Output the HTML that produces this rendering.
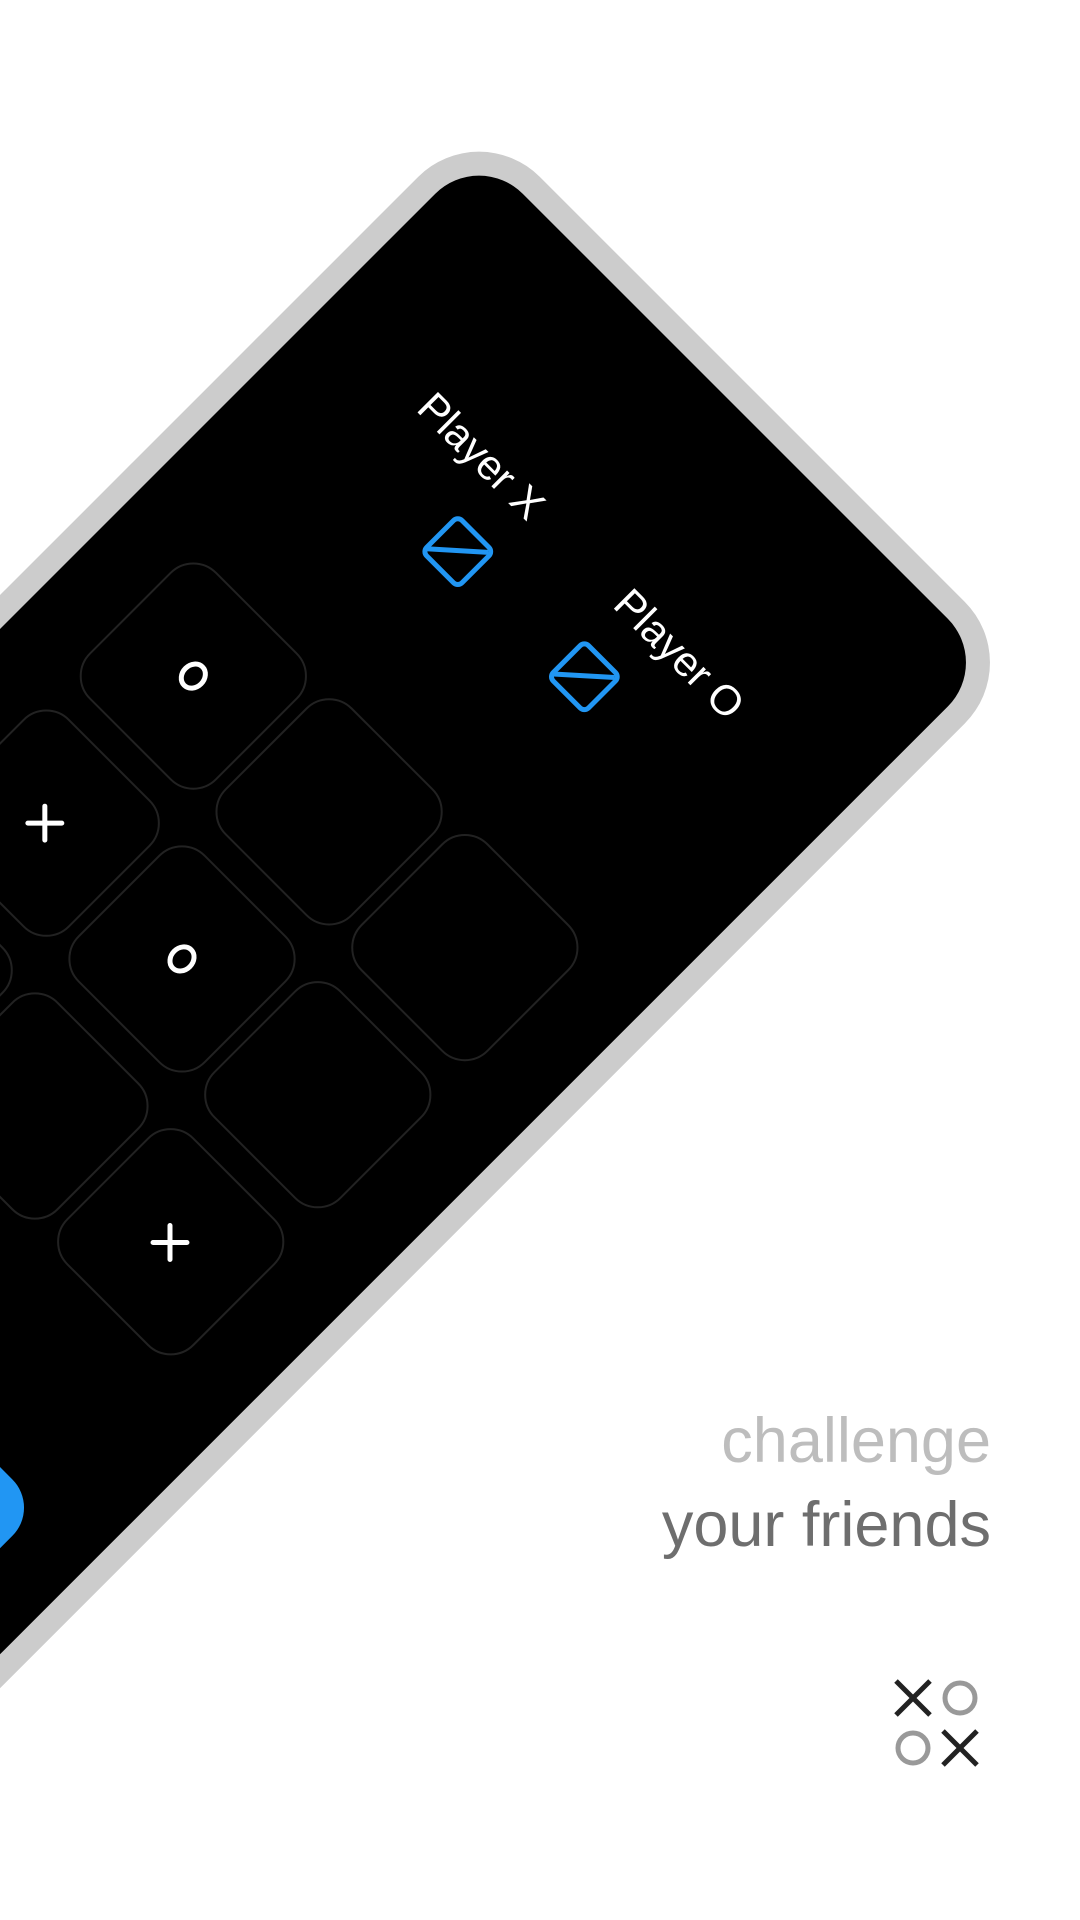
<!DOCTYPE html>
<html><head><meta charset="utf-8"><style>
html,body{margin:0;padding:0;background:#fff;width:1080px;height:1920px;overflow:hidden}
svg{display:block}
</style></head><body>
<svg width="1080" height="1920" viewBox="0 0 1080 1920" xmlns="http://www.w3.org/2000/svg">
<g transform="translate(479,150) rotate(45)">
  <rect x="-24" y="-24" width="773" height="2600" rx="86" fill="#cccccc"/>
  <rect x="0" y="0" width="725" height="2560" rx="62" fill="#000"/>
  <g font-family="Liberation Sans, sans-serif" fill="#fff" font-size="42" text-anchor="middle">
    <text x="218" y="229">Player X</text>
    <text x="498" y="229">Player O</text>
  </g>
  <g fill="none" stroke="#2196f3" stroke-width="5" stroke-linejoin="round">
    <rect x="244" y="274" width="50" height="50" rx="6"/>
    <line x1="245" y1="319" x2="291" y2="278"/>
    <rect x="422" y="273" width="50" height="50" rx="6"/>
    <line x1="423" y1="318" x2="469" y2="277"/>
  </g>
  <g fill="#000" stroke="#222" stroke-width="2">
    <rect x="81" y="485" width="178" height="178" rx="32"/>
    <rect x="273" y="485" width="178" height="178" rx="32"/>
    <rect x="465" y="485" width="178" height="178" rx="32"/>
    <rect x="81" y="693" width="178" height="178" rx="32"/>
    <rect x="273" y="693" width="178" height="178" rx="32"/>
    <rect x="465" y="693" width="178" height="178" rx="32"/>
    <rect x="81" y="901" width="178" height="178" rx="32"/>
    <rect x="273" y="901" width="178" height="178" rx="32"/>
    <rect x="465" y="901" width="178" height="178" rx="32"/>
  </g>
  <g fill="none" stroke="#fff" stroke-width="5" stroke-linecap="round">
    <ellipse cx="170" cy="574" rx="11" ry="13"/>
    <ellipse cx="362" cy="782" rx="11" ry="13"/>
    <line x1="157" y1="771" x2="181" y2="795"/><line x1="181" y1="771" x2="157" y2="795"/>
    <line x1="542" y1="979" x2="566" y2="1003"/><line x1="566" y1="979" x2="542" y2="1003"/>
  </g>
  <rect x="40" y="1270" width="610" height="110" rx="40" fill="#2196f3"/>
</g>
<g font-family="Liberation Sans, sans-serif" font-size="63" text-anchor="end">
  <text x="991" y="1462" fill="#bdbdbd">challenge</text>
  <text x="991" y="1546" fill="#6e6e6e">your friends</text>
</g>
<g stroke-width="5" fill="none">
  <g stroke="#222"><line x1="896" y1="1681" x2="930" y2="1715"/><line x1="930" y1="1681" x2="896" y2="1715"/>
  <line x1="943" y1="1731" x2="977" y2="1765"/><line x1="977" y1="1731" x2="943" y2="1765"/></g>
  <g stroke="#999"><circle cx="960" cy="1698" r="15"/><circle cx="913" cy="1748" r="15"/></g>
</g>
</svg>
</body></html>
